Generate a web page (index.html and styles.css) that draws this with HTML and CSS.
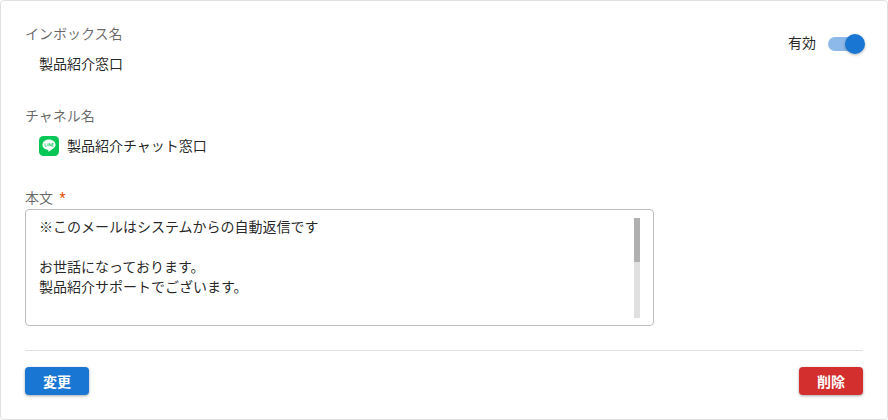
FILE: index.html
```html
<!DOCTYPE html>
<html lang="ja">
<head>
    <meta charset="UTF-8">
    <title>インボックス設定</title>
    <link rel="stylesheet" href="styles.css">
</head>
<body>
    <div class="card">
        <div class="top-row">
            <div class="fields">
                <div class="field">
                    <div class="label">インボックス名</div>
                    <div class="value">製品紹介窓口</div>
                </div>
                <div class="field">
                    <div class="label">チャネル名</div>
                    <div class="value channel">
                        <svg class="line-icon" viewBox="0 0 20 20" width="20" height="20">
                            <rect width="20" height="20" rx="4.5" fill="#06c755"/>
                            <path d="M10 3.6c-3.6 0-6.5 2.3-6.5 5.2 0 2.6 2.3 4.7 5.4 5.1.5.1.5.4.4 1.1-.1.5.2.7.7.4 1.9-1 4-2.500 5.200-3.800.8-.8 1.300-1.700 1.300-2.800 0-2.900-2.900-5.200-6.500-5.200z" fill="#fff"/>
                            <path d="M6 7.400v2.800h1.700M8.900 7.400v2.800M10.200 10.200V7.400l1.800 2.800V7.400M14.600 7.400h-1.500v2.800h1.500M13.100 8.800h1.400" fill="none" stroke="#06c755" stroke-width=".7"/>
                        </svg>
                        <span>製品紹介チャット窓口</span>
                    </div>
                </div>
            </div>
            <div class="status">
                <span>有効</span>
                <div class="switch">
                    <div class="switch-track"></div>
                    <div class="switch-thumb"></div>
                </div>
            </div>
        </div>

        <div class="label">本文 <span class="required">*</span></div>
        <div class="textbox">
            <div class="textbox-text">※このメールはシステムからの自動返信です<br><br>お世話になっております。<br>製品紹介サポートでございます。</div>
            <div class="scrollbar"><div class="scrollbar-thumb"></div></div>
        </div>

        <div class="actions">
            <button class="btn btn-primary">変更</button>
            <button class="btn btn-danger">削除</button>
        </div>
    </div>
</body>
</html>
```

FILE: styles.css
```css
* {
    box-sizing: border-box;
    margin: 0;
    padding: 0;
}

html, body {
    width: 888px;
    height: 420px;
    overflow: hidden;
}

body {
    font-family: Roboto, "Noto Sans CJK JP", sans-serif;
    font-size: 14px;
    line-height: 20px;
    background-color: #fff;
    color: rgba(0, 0, 0, 0.87);
}

.card {
    height: 420px;
    padding: 23px 24px 0;
    border: 1px solid #e0e0e0;
    border-radius: 4px;
    background-color: #fff;
}

.top-row {
    display: flex;
    justify-content: space-between;
    align-items: flex-start;
}

.field {
    margin-bottom: 32px;
}

.label {
    height: 20px;
    color: rgba(0, 0, 0, 0.6);
}

.value {
    margin-top: 10px;
    padding-left: 14px;
    height: 20px;
}

.channel {
    display: flex;
    align-items: center;
    gap: 8px;
}

.line-icon {
    flex: none;
}

.status {
    display: flex;
    align-items: center;
    gap: 12px;
    margin-top: 9px;
    height: 20px;
}

.switch {
    position: relative;
    width: 34px;
    height: 14px;
    margin-top: 2px;
    margin-right: 1px;
}

.switch-track {
    width: 32px;
    height: 14px;
    border-radius: 7px;
    background-color: #8cb9ea;
}

.switch-thumb {
    position: absolute;
    top: -3px;
    right: -3px;
    width: 20px;
    height: 20px;
    border-radius: 50%;
    background-color: #1976d2;
    box-shadow: 0 1px 3px rgba(0, 0, 0, 0.3);
}

.required {
    color: #e65100;
    margin-left: 3px;
}

.textbox {
    position: relative;
    width: 629px;
    height: 117px;
    margin-top: 1px;
    padding: 7px 13px;
    border: 1px solid #bdbdbd;
    border-radius: 4px;
    overflow: hidden;
}

.textbox-text {
    line-height: 20px;
}

.scrollbar {
    position: absolute;
    top: 8px;
    right: 13px;
    width: 6px;
    height: 100px;
    background-color: #e0e0e0;
}

.scrollbar-thumb {
    height: 44px;
    background-color: #b0b0b0;
}

.actions {
    display: flex;
    justify-content: space-between;
    margin-top: 24px;
    padding-top: 16px;
    border-top: 1px solid #e0e0e0;
}

.btn {
    width: 64px;
    height: 28px;
    border: none;
    border-radius: 4px;
    color: #fff;
    font-family: inherit;
    font-size: 14px;
    font-weight: 700;
    box-shadow: 0 1px 3px rgba(0, 0, 0, 0.35);
    cursor: pointer;
}

.btn-primary {
    background-color: #1976d2;
}

.btn-danger {
    background-color: #d32f2f;
}
```
